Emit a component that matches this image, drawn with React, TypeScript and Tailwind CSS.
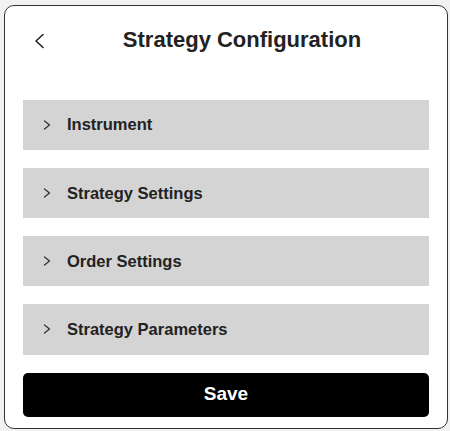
const SECTIONS = ['Instrument', 'Strategy Settings', 'Order Settings', 'Strategy Parameters'];

function ChevronLeft() {
  return (
    <svg width="12" height="16" viewBox="0 0 12 16" fill="none">
      <polyline points="10,1.5 3,8 10,14.5" stroke="#222" strokeWidth="1.6" strokeLinecap="round" strokeLinejoin="round" />
    </svg>
  );
}

function ChevronRight() {
  return (
    <svg width="8" height="10" viewBox="0 0 8 10" fill="none">
      <polyline points="1.5,1 6.5,5 1.5,9" stroke="#333" strokeWidth="1.3" strokeLinecap="round" strokeLinejoin="round" />
    </svg>
  );
}

export default function App() {
  return (
    <div
      className="w-full h-[431px] bg-[#f2f2f2] pt-[5px] pl-[4px] pr-[2px] pb-[2px]"
      style={{ fontFamily: '"Liberation Sans", Arial, sans-serif' }}
    >
      <div className="h-[424px] bg-white border border-[#333] rounded-[10px] px-[18px] pt-[18px] flex flex-col">
        {/* header */}
        <div className="h-8 flex items-center">
          <button className="w-8 h-8 flex items-center justify-center pt-[2px]">
            <ChevronLeft />
          </button>
          <h1 className="flex-1 text-center text-[22px] leading-8 font-bold text-[#222]">
            Strategy Configuration
          </h1>
        </div>

        {/* accordion sections */}
        <div className="mt-[43.5px] flex flex-col gap-[18px]">
          {SECTIONS.map(name => (
            <div key={name} className="h-[50.25px] bg-[#d4d4d4] flex items-center pl-5">
              <ChevronRight />
              <span className="ml-[16px] text-[16.5px] font-bold text-[#222]">{name}</span>
            </div>
          ))}
        </div>

        <button className="mt-[18px] h-[44px] w-full bg-black rounded-[5px] text-white text-[19px] font-bold">
          Save
        </button>
      </div>
    </div>
  );
}
